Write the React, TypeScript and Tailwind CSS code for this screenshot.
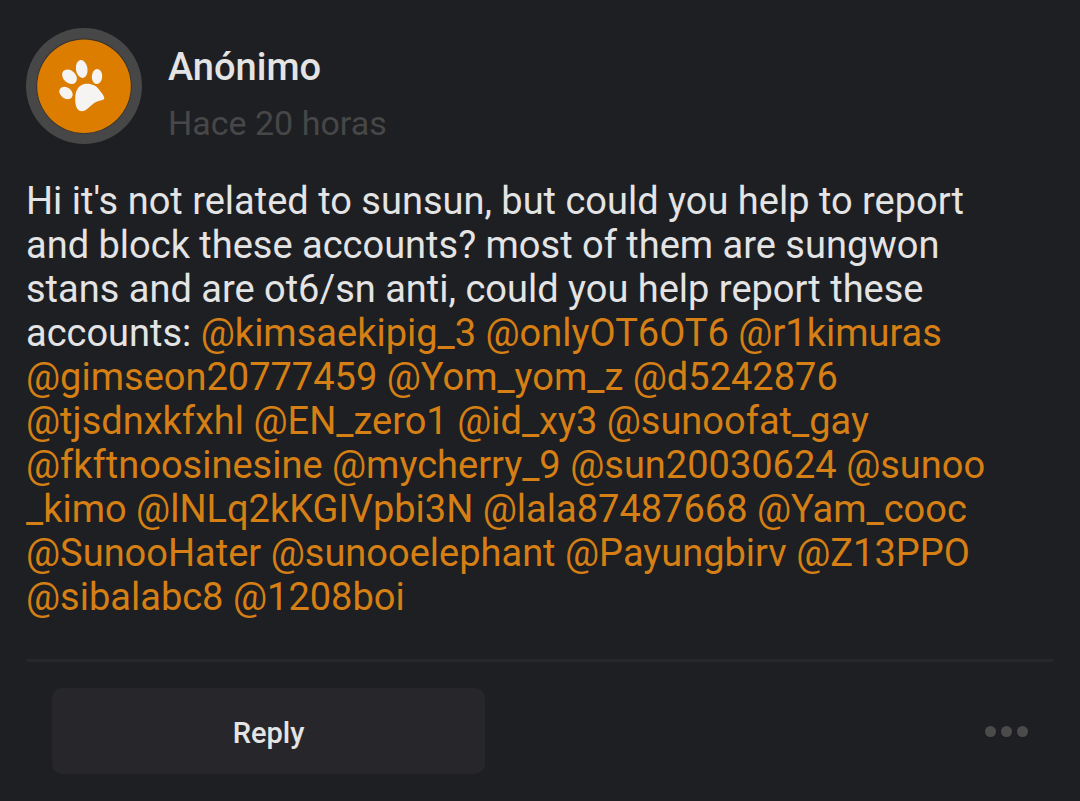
const mentionLines: string[][] = [
  ["@kimsaekipig_3", "@onlyOT6OT6", "@r1kimuras"],
  ["@gimseon20777459", "@Yom_yom_z", "@d5242876"],
  ["@tjsdnxkfxhl", "@EN_zero1", "@id_xy3", "@sunoofat_gay"],
  ["@fkftnoosinesine", "@mycherry_9", "@sun20030624", "@sunoo_kimo"],
  ["@lNLq2kKGIVpbi3N", "@lala87487668", "@Yam_cooc"],
  ["@SunooHater", "@sunooelephant", "@Payungbirv", "@Z13PPO"],
  ["@sibalabc8", "@1208boi"],
];

function Mention({ name }: { name: string }) {
  const [head, tail] = name.split("_kimo");
  return (
    <a href={"#" + name.slice(1)} className="text-[#d57f14]">
      {head}
      {tail !== undefined && (
        <>
          <wbr />
          _kimo
        </>
      )}
    </a>
  );
}

function PawAvatar() {
  return (
    <svg viewBox="0 0 116 116" className="size-[116px] shrink-0" role="img" aria-label="Anónimo">
      <circle cx="58" cy="58" r="58" fill="#474747" />
      <circle cx="58" cy="58" r="47.6" fill="#33302b" />
      <circle cx="58" cy="58.2" r="46.8" fill="#dc7d00" />
      <g fill="#f5f4f2">
        <ellipse cx="43.5" cy="48.7" rx="8.4" ry="6.2" transform="rotate(43 43.5 48.7)" />
        <ellipse cx="55.7" cy="41" rx="5.8" ry="9" transform="rotate(-8 55.7 41)" />
        <ellipse cx="71" cy="48.5" rx="5.2" ry="7.6" transform="rotate(3 71 48.5)" />
        <ellipse cx="40" cy="65" rx="7.3" ry="5.5" transform="rotate(36 40 65)" />
        <path d="M58.5 56C64 54.9 70 57.2 73 61.5C75 64.5 78 67.3 78.3 70C78.4 72.6 74 71.8 69.5 74.2C64 77.2 61.5 83 55.5 83.2C50.5 83 49.3 77 49.2 71C49.2 64 51.5 57.4 58.5 56Z" />
      </g>
    </svg>
  );
}

export default function App() {
  return (
    <main className="min-h-screen bg-[#1e1f23] px-[26px] pt-7 pb-7 font-[Roboto,'Liberation_Sans',sans-serif] text-[#e4e4e5]">
      <article>
        <header className="flex items-start gap-[26px]">
          <PawAvatar />
          <div className="flex flex-col gap-3 pt-[17px]">
            <h1 className="text-[38px] leading-[44px] font-medium">Anónimo</h1>
            <time className="text-[34px] leading-[44px] text-[#474747]">Hace 20 horas</time>
          </div>
        </header>
        <p className="mt-[34px] pr-[60px] text-[38px] leading-[44px]">
          Hi it's not related to sunsun, but could you help to report
          <br />
          and block these accounts? most of them are sungwon
          <br />
          stans and are ot6/sn anti, could you help report these
          <br />
          accounts:{" "}
          {mentionLines.map((line, i) => (
            <span key={i}>
              {line.map((name) => (
                <span key={name}>
                  <Mention name={name} />{" "}
                </span>
              ))}
              {i !== 3 && i !== 6 && <br />}
            </span>
          ))}
        </p>
        <footer className="mt-10 flex items-center justify-between border-t-[3px] border-[#27262b] px-[26px] pt-[26px]">
          <button type="button" className="h-[86px] w-[433px] rounded-[10px] bg-[#27262b] pt-1.5 text-[29px] font-medium">
            Reply
          </button>
          <button type="button" aria-label="Más opciones" className="flex gap-[5px]">
            <span className="size-[11px] rounded-full bg-[#4b4b4b]" />
            <span className="size-[11px] rounded-full bg-[#4b4b4b]" />
            <span className="size-[11px] rounded-full bg-[#4b4b4b]" />
          </button>
        </footer>
      </article>
    </main>
  );
}
